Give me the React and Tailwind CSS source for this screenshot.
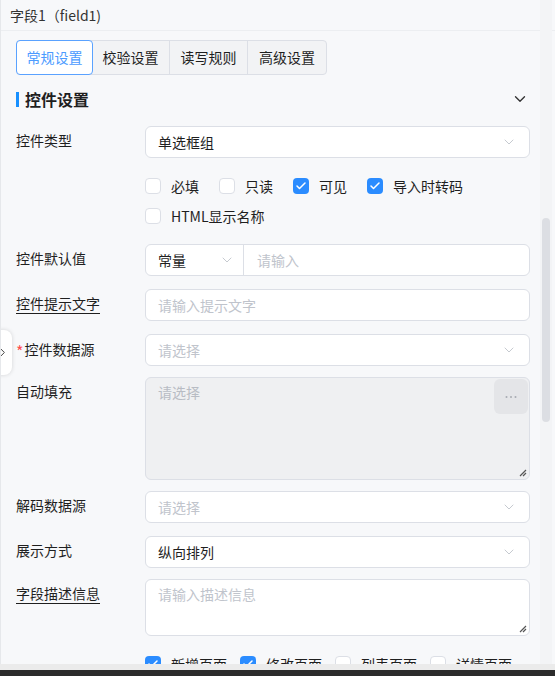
import { ChevronDown, ChevronRight, Check } from "lucide-react"

const font = { fontFamily: '"Noto Sans CJK SC", "Noto Sans", sans-serif' }

function Box({ checked, label, gap = "mr-[20px]" }) {
    return (
        <label className={"flex items-center h-[16px] " + gap}>
            <span
                className={
                    checked
                        ? "w-[16px] h-[16px] rounded-[4px] bg-[#2b8cff] flex items-center justify-center"
                        : "w-[16px] h-[16px] rounded-[4px] border border-[#dcdfe6] bg-white"
                }
            >
                {checked && <Check size={12} strokeWidth={3} className="text-white" />}
            </span>
            <span className="ml-[10px] text-[14px] text-[#1f1f1f]">{label}</span>
        </label>
    )
}

function Row({ label, underline, required, top, children }) {
    return (
        <div className={"flex " + top}>
            <div className="w-[129px] shrink-0 h-[32px] leading-[29px] text-[14px] text-[#1f1f1f]">
                {required && <span className="relative top-[3px] text-[16px] text-[#ff4d4f] mr-[1px]">*</span>}
                <span className={underline ? "underline underline-offset-[4px]" : ""}>{label}</span>
            </div>
            <div className="w-[385px]">{children}</div>
        </div>
    )
}

function Select({ value, placeholder }) {
    return (
        <div className="h-[32px] rounded-[6px] border border-[#dcdfe6] bg-white flex items-center px-[12px]">
            <span className={"flex-1 text-[14px] " + (value ? "text-[#1f1f1f]" : "text-[#c0c4cc]")}>
                {value || placeholder}
            </span>
            <ChevronDown size={16} strokeWidth={1.2} className="text-[#b8bcc4]" />
        </div>
    )
}

function Input({ placeholder }) {
    return (
        <div className="h-[32px] rounded-[6px] border border-[#dcdfe6] bg-white flex items-center px-[12px] text-[14px] text-[#c0c4cc]">
            {placeholder}
        </div>
    )
}

function Grip() {
    return (
        <svg width="10" height="10" viewBox="0 0 10 10" className="absolute right-[2px] bottom-[2px]">
            <path d="M9 3 L3 9 M9 6 L6 9" stroke="#555" strokeWidth="1.2" />
        </svg>
    )
}

export default function App() {
    return (
        <div className="w-[555px] h-[676px] overflow-hidden relative bg-[#2b2b2b]" style={font}>
            <div className="h-[664px] bg-[#f7f8fa] border-l border-[#e6e8eb] relative overflow-hidden">
                <div className="h-[31px] px-[9px] flex items-center text-[14px] text-[#333] border-b border-[#eceef1]">
                    字段1（field1)
                </div>

                <div className="pl-[15px] pr-[25px]">
                    <div className="mt-[9px] flex h-[35px] w-[311px] rounded-[4px] border border-[#dcdfe6] bg-[#f2f3f5] text-[14px] text-[#1f1f1f]">
                        <div className="w-[77px] -m-px h-[35px] flex items-center justify-center rounded-[4px] border border-[#5aa2ff] bg-white text-[#4c9bff]">常规设置</div>
                        <div className="w-[78px] flex items-center justify-center border-r border-[#dcdfe6]">校验设置</div>
                        <div className="w-[78px] flex items-center justify-center border-r border-[#dcdfe6]">读写规则</div>
                        <div className="w-[78px] flex items-center justify-center">高级设置</div>
                    </div>

                    <div className="mt-[9px] h-[30px] flex items-center">
                        <span className="w-[3px] h-[15px] bg-[#1890ff] mr-[6px]" />
                        <span className="flex-1 text-[16px] font-bold text-[#1f1f1f]">控件设置</span>
                        <ChevronDown size={18} strokeWidth={1.8} className="text-[#333] mr-[1px]" />
                    </div>

                    <Row label="控件类型" top="mt-[12px]">
                        <Select value="单选框组" />
                    </Row>

                    <div className="ml-[129px] mt-[20px] flex">
                        <Box label="必填" />
                        <Box label="只读" />
                        <Box checked label="可见" />
                        <Box checked label="导入时转码" />
                    </div>
                    <div className="ml-[129px] mt-[14px] flex">
                        <Box label="HTML显示名称" />
                    </div>

                    <Row label="控件默认值" top="mt-[20px]">
                        <div className="h-[32px] rounded-[6px] border border-[#dcdfe6] bg-white flex items-center text-[14px]">
                            <div className="w-[98px] h-full flex items-center pl-[12px] pr-[8px] border-r border-[#dcdfe6]">
                                <span className="flex-1 text-[#1f1f1f]">常量</span>
                                <ChevronDown size={16} strokeWidth={1.2} className="text-[#b8bcc4]" />
                            </div>
                            <span className="pl-[13px] text-[#c0c4cc]">请输入</span>
                        </div>
                    </Row>

                    <Row label="控件提示文字" underline top="mt-[13px]">
                        <Input placeholder="请输入提示文字" />
                    </Row>

                    <Row label="控件数据源" required top="mt-[13px]">
                        <Select placeholder="请选择" />
                    </Row>

                    <Row label="自动填充" top="mt-[11px]">
                        <div className="relative h-[103px] rounded-[6px] border border-[#dcdfe6] bg-[#eff0f2] px-[12px] pt-[4px] text-[14px] text-[#b8bcc4]">
                            请选择
                            <div className="absolute right-[1px] top-[1px] w-[34px] h-[35px] rounded-[6px] bg-[#e4e5e8] flex items-center justify-center">
                                <svg width="12" height="4" viewBox="0 0 12 4">
                                    <circle cx="1.5" cy="2" r="1" fill="#a8abb2" />
                                    <circle cx="6" cy="2" r="1" fill="#a8abb2" />
                                    <circle cx="10.5" cy="2" r="1" fill="#a8abb2" />
                                </svg>
                            </div>
                            <Grip />
                        </div>
                    </Row>

                    <Row label="解码数据源" top="mt-[11px]">
                        <Select placeholder="请选择" />
                    </Row>

                    <Row label="展示方式" top="mt-[13px]">
                        <Select value="纵向排列" />
                    </Row>

                    <Row label="字段描述信息" underline top="mt-[11px]">
                        <div className="relative h-[57px] rounded-[6px] border border-[#dcdfe6] bg-white px-[12px] pt-[4px] text-[14px] text-[#c0c4cc]">
                            请输入描述信息
                            <Grip />
                        </div>
                    </Row>

                    <div className="ml-[129px] mt-[20px] flex">
                        <Box checked gap="mr-[13px]" label="新增页面" />
                        <Box checked gap="mr-[13px]" label="修改页面" />
                        <Box gap="mr-[13px]" label="列表页面" />
                        <Box gap="mr-[13px]" label="详情页面" />
                    </div>
                </div>

                {/* side collapse handle */}
                <div className="absolute left-[-14px] top-[330px] w-[25px] h-[45px] rounded-[8px] bg-white shadow-[0_0_4px_rgba(0,0,0,0.15)] overflow-hidden">
                    <ChevronRight size={15} strokeWidth={1.6} className="absolute left-[8px] top-[15px] text-[#444]" />
                </div>

                {/* scrollbar */}
                <div className="absolute right-[3px] top-0 bottom-0 w-[12px] bg-[#f3f4f6]">
                    <div className="absolute left-[2px] top-[218px] w-[8px] h-[204px] rounded-full bg-[#dcdee3]" />
                </div>
            </div>
            <div className="h-[6px] bg-[#ebebeb]" />
        </div>
    )
}
